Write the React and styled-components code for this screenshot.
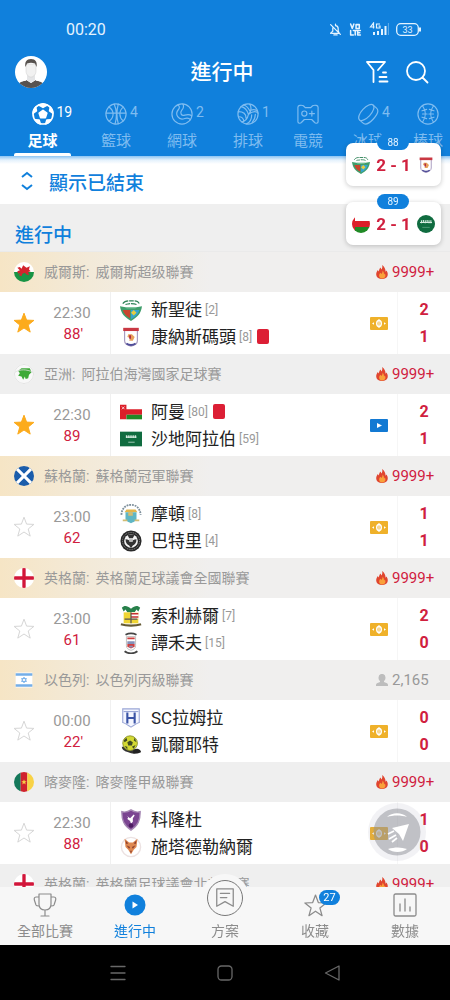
import React, { useState } from "react";
import styled, { createGlobalStyle, css } from "styled-components";

const blue = "#1080dc";
const red = "#d0203e";
const gold = "#efb12a";

const GlobalStyle = createGlobalStyle`
  * { box-sizing: border-box; }
  body {
    margin: 0;
    background: #fff;
    color: #222;
    font-family: Roboto, "Noto Sans CJK TC", sans-serif;
  }
  button { border: 0; padding: 0; background: none; color: inherit; font: inherit; cursor: pointer; }
  ul { list-style: none; margin: 0; padding: 0; }
  h1, h2, h3, p { margin: 0; font-weight: 500; }
  svg { display: block; flex: none; }
`;

const Screen = styled.div`
  position: relative;
  display: flex;
  flex-direction: column;
  height: 100vh;
  overflow: hidden;
`;

/* Header */
const Header = styled.header`
  flex: none;
  color: #fff;
  background: ${blue};
`;
const StatusBar = styled.div`
  display: flex;
  align-items: center;
  justify-content: space-between;
  height: 50px;
  padding: 8px 29px 0 66px;
  font-size: 16px;
  color: #e4f3ff;
`;
const StatusIcons = styled.div`
  display: flex;
  align-items: center;
  gap: 7px;
`;
const AppBar = styled.div`
  display: grid;
  grid-template-columns: 1fr auto 1fr;
  align-items: center;
  height: 44px;
  padding: 0 21px 0 15px;
`;
const AppTitle = styled.h1`
  font-size: 21px;
  line-height: 28px;
`;
const Actions = styled.div`
  display: flex;
  justify-content: flex-end;
  gap: 16px;
`;
const Avatar = styled.button`
  width: 32px;
  height: 32px;
`;
const Sports = styled.nav`
  display: flex;
  padding-left: 2px;
  overflow: hidden;
`;
const SportTab = styled.button`
  flex: none;
  display: flex;
  flex-direction: column;
  width: ${(p) => (p.$digits === 2 ? 81 : p.$digits === 1 ? 66 : 54)}px;
  padding: 9px 12px 0;
  color: ${(p) => (p.$active ? "#fff" : "#7fbcf0")};
`;
const SportIcon = styled.span`
  display: grid;
  grid-template-columns: 1fr 22px 1fr;
  column-gap: 3px;
  align-self: center;
  width: ${(p) => (p.$digits === 2 ? 60 : 44)}px;
  height: 22px;
  font-size: 14px;
  line-height: 18px;
  text-align: left;
  svg { grid-column: 2; }
`;
const SportName = styled.span`
  height: 28px;
  padding-top: 4px;
  font-size: 15px;
  line-height: 24px;
  text-align: center;
  white-space: nowrap;
  font-weight: ${(p) => (p.$active ? 700 : 400)};
`;
const Underline = styled.span`
  height: 3px;
  border-radius: 2px 2px 0 0;
  background: ${(p) => (p.$active ? "#fff" : "transparent")};
`;

/* List */
const Main = styled.main`
  flex: 1;
  min-height: 0;
  overflow-y: auto;
  scrollbar-width: none;
  background: #fff;
`;
const FinishedToggle = styled.button`
  display: flex;
  align-items: center;
  gap: 15px;
  width: 100%;
  height: 48px;
  padding: 2px 20px 0;
  background: linear-gradient(#8cc4f3, #e3f1fc 4px, #fff 8px);
  color: ${blue};
  font-size: 19px;
  font-weight: 500;
`;
const SectionTitle = styled.h2`
  height: 48px;
  padding: 18px 15px 0;
  background: #efefef;
  border-bottom: 1px solid #eaeaea;
  color: ${blue};
  font-size: 19px;
  line-height: 28px;
`;
const LeagueBar = styled.div`
  display: flex;
  align-items: center;
  height: 40px;
  padding: 0 16px 0 14px;
  background: ${(p) => (p.$featured ? "linear-gradient(90deg, #f6e5c5 0, #f3ead9 90px, #f0efee 210px)" : "#efefef")};
`;
const LeagueName = styled.h3`
  display: flex;
  flex: 1;
  gap: 6px;
  padding-left: 10px;
  color: #999;
  font-size: 14px;
  font-weight: 400;
  line-height: 20px;
  white-space: nowrap;
`;
const Heat = styled.span`
  display: flex;
  align-items: center;
  gap: 4px;
  color: ${(p) => (p.$hot ? red : "#999")};
  font-size: 15px;
  span { width: 42px; }
`;
const Match = styled.div`
  display: flex;
  height: 62px;
`;
const StarButton = styled.button`
  display: grid;
  place-items: center;
  width: 48px;
`;
const Clock = styled.div`
  width: 63px;
  padding: 11px 14px 0 0;
  border-right: 1px solid #f0f0f0;
  color: #999;
  font-size: 15px;
  line-height: 21px;
  text-align: center;
`;
const Minute = styled.p`
  color: ${red};
  font-weight: 400;
`;
const Prime = styled.span`
  display: inline-block;
  width: 0;
`;
const Teams = styled.div`
  flex: 1;
  padding: 4px 0 4px 9px;
`;
const Team = styled.div`
  display: flex;
  align-items: center;
  height: 27px;
  color: #222;
  font-size: 17px;
  line-height: 24px;
  white-space: nowrap;
`;
const TeamName = styled.span`
  padding-left: 9px;
`;
const Rank = styled.span`
  padding-left: 3px;
  color: #999;
  font-size: 12px;
`;
const RedCard = styled.span`
  width: 12px;
  height: 15px;
  margin-left: 5px;
  border-radius: 2px;
  background: #dc1f35;
`;
const Feed = styled.button`
  display: grid;
  place-items: center;
  width: 36px;
`;
const Scores = styled.div`
  width: 53px;
  padding: 4px 0;
  border-left: 1px solid #f6f6f6;
  color: ${red};
  font-size: 16px;
  font-weight: 700;
  line-height: 27px;
  text-align: center;
`;

/* Overlays */
const Pinned = styled.aside`
  position: absolute;
  top: 143px;
  right: 9px;
  z-index: 2;
  display: flex;
  flex-direction: column;
  gap: 16px;
`;
const PinnedCard = styled.button`
  position: relative;
  display: flex;
  align-items: center;
  justify-content: space-between;
  width: 95px;
  height: 43px;
  padding: 0 6px;
  border-radius: 7px;
  background: #fff;
  box-shadow: 0 1px 5px rgba(0, 0, 0, 0.22);
  color: ${red};
  font-size: 17px;
  font-weight: 700;
`;
const PinnedMinute = styled.span`
  position: absolute;
  top: -8px;
  left: 31px;
  width: 32px;
  height: 15px;
  border-radius: 8px;
  background: ${blue};
  color: #e4f3ff;
  font-size: 10px;
  font-weight: 400;
  line-height: 15px;
  text-align: center;
`;
const Compass = styled.button`
  position: absolute;
  right: 22px;
  bottom: 137px;
  z-index: 2;
`;

/* Bottom bars */
const BottomNav = styled.nav`
  position: relative;
  z-index: 1;
  flex: none;
  display: grid;
  grid-template-columns: repeat(5, 1fr);
  grid-template-rows: 58px;
  background: #f7f7f7;
`;
const NavItem = styled.button`
  position: relative;
  display: flex;
  flex-direction: column;
  align-items: center;
  justify-content: flex-end;
  gap: 3px;
  padding-bottom: 4px;
  color: ${(p) => (p.$active ? blue : "#8c8c8c")};
  font-size: 14px;
  line-height: 20px;
`;
const raised = css`
  flex: none;
  width: 36px;
  height: 36px;
  margin-bottom: 2px;
  border-radius: 50%;
  border: 1px solid #777;
  background: #f7f7f7;
  box-shadow: 0 0 0 6px #f7f7f7;
`;
const NavIcon = styled.span`
  display: grid;
  place-items: center;
  height: 26px;
  ${(p) => p.$raised && raised}
`;
const NavBadge = styled.span`
  position: absolute;
  top: 3px;
  left: 50%;
  margin-left: 4px;
  width: 21px;
  height: 15px;
  border-radius: 8px;
  background: ${blue};
  color: #fff;
  font-size: 11px;
  line-height: 15px;
`;
const SystemBar = styled.footer`
  flex: none;
  display: grid;
  grid-template-columns: repeat(3, 1fr);
  place-items: center;
  height: 55px;
  padding: 0 64px;
  background: #000;
  color: #686868;
`;

/* Icons */
const Line = ({ s = 22, w = 1.3, box = 24, children, ...rest }) => (
  <svg width={s} height={s} viewBox={`0 0 ${box} ${box}`} fill="none" stroke="currentColor" strokeWidth={w} strokeLinecap="round" strokeLinejoin="round" aria-hidden="true" {...rest}>
    {children}
  </svg>
);

const sportIcons = {
  football: (
    <Line w={1.8}>
      <circle cx="12" cy="12" r="10.9" />
      <path d="m12 8 4.200 3-1.600 4.900H9.400L7.800 11z" fill="currentColor" />
      <path d="M7.500 2.200 12 4.800l4.500-2.600L12 1zM1.300 11l3.500-2.500L4 4.500l-2 3zM22.700 11l-3.500-2.500.8-4 2 3zM3.500 18.300l4.300.4 1.200 4-3-1.500zM20.500 18.300l-4.300.4-1.200 4 3-1.500z" fill="currentColor" />
    </Line>
  ),
  basketball: (
    <Line>
      <circle cx="12" cy="12" r="11" />
      <path d="M10 1.2c3 7 3 14.600 1 21.600M14.500 1.300c-2 7.200-2 14.400 0 21.300M1.200 11h21.600M4.300 4.300c6 4 6 11.500.2 15.500M20 4.500c-5 4-5 10.800-.2 15" />
    </Line>
  ),
  tennis: (
    <Line>
      <circle cx="12" cy="12" r="11" />
      <path d="M13 1.200c1.500 2.600.6 4.600-1.200 6.600-2.500 3-.5 6.700 3.200 5.500 3-1 5.500-.9 7.500.6M7.500 2.200c2.200 1.500 2 3.300.6 4.900-4.500 5.300.1 12.300 6.900 9.800 2.600-.9 4.800-.4 6.200 1.300" />
    </Line>
  ),
  volleyball: (
    <Line>
      <circle cx="12" cy="12" r="11" />
      <path d="M12.500 12.500C11 7.500 8 4.500 4.300 4M14 8.500C12 5 9.500 2.500 7 2.200M13 12c4-3 7.500-3.500 10-1M15 8c2.500-1.200 4.800-1 6.300.3M14 1.300c2 3.500 1.500 7.500-1.200 11M12.500 12.500C11.500 17 9 20.500 5 20.500M16 13c0 4-2 8-5.500 9.800M20 12.500c0 3.500-1.500 6.500-3.500 9M1.400 9.500c5 0 8.500 2.500 8.500 7M2 15c3 0 5 1.500 5.500 5" />
    </Line>
  ),
  esports: (
    <Line>
      <path d="M1 4.500c0-2 3.500-2.500 6-1.500l2 2h6l2-2c2.500-1 6-.5 6 1.500v16c0 2-3 2-4 .5L16 18H8l-3 3c-1 1.500-4 1.500-4-.5z" />
      <circle cx="8" cy="11.500" r="2.800" />
      <path d="M13.500 11.500h5.500M16.200 8.700v5.600" />
    </Line>
  ),
  hockey: (
    <Line>
      <g transform="rotate(-47 12 12)">
        <ellipse cx="12" cy="9.500" rx="11" ry="5" />
        <path d="M1 9.500v5c0 3.500 4.500 5.500 11 5.500s11-2 11-5.500v-5" />
      </g>
    </Line>
  ),
  baseball: (
    <Line>
      <circle cx="12" cy="12" r="11" />
      <path d="M6 3c4 5.500 4 12.500 0 18M18 3c-4 5.500-4 12.500 0 18M5.500 8.500l5-1.500M6 12h5M5.500 15.500l5 1.500M18.500 8.500l-5-1.500M18 12h-5M18.500 15.500l-5 1.500" />
    </Line>
  ),
};

const StatusGlyphs = () => (
  <StatusIcons>
    <Line s={13} w={2.300}>
      <path d="M12 2v2M5 19h14l-2-4v-4c0-4-2-6-5-6M7 9v6l-4 4M9 22h6M3 3l18 18" />
    </Line>
    <Line s={13} w={2.800}>
      <path d="m3 2 3 8 3-8M13 3h6v7h-6zM3 14v8h5M8 14h7M11.500 14v8M21 14h-5v8h5M16 18h4" />
    </Line>
    <svg width="20" height="14" viewBox="0 0 20 14" fill="none" stroke="currentColor" strokeWidth="1.200" aria-hidden="true">
      <path d="M4.500 6.500v-5.500L1.500 5h4M11 2H7.500v4H11V4H9.500" />
      <path d="M5 10v3M9 9v4M13 7v6M16.500 4v9" strokeWidth="2" />
      <path d="M19.500 1v12" opacity=".35" />
    </svg>
    <svg width="25" height="13" viewBox="0 0 25 13" fill="none" stroke="currentColor" strokeWidth="1.300" aria-hidden="true">
      <rect x=".7" y=".7" width="21.600" height="11.600" rx="4" />
      <path d="M24 4.500v4" strokeWidth="2" />
      <text x="11.500" y="10" textAnchor="middle" fontSize="9" fill="currentColor" stroke="none">33</text>
    </svg>
  </StatusIcons>
);

const AvatarArt = () => (
  <svg width="32" height="32" viewBox="0 0 32 32" aria-hidden="true">
    <clipPath id="face"><circle cx="16" cy="16" r="16" /></clipPath>
    <g clipPath="url(#face)">
      <path fill="#fff" d="M0 0h32v32H0z" />
      <path fill="#57524f" d="M2 32c0-5 4-6 9-8l5 3 5-3c5 2 9 3 9 8z" />
      <path fill="#e4e5e7" d="M12 17h8v7l-4 3-4-3z" />
      <path fill="#f1f1f1" stroke="#cfcfcf" strokeWidth=".5" d="M11 8h10v7c0 4-3 6-5 6s-5-2-5-6z" />
      <path fill="#57524f" d="M10.500 11c-1-5 1-8 5.500-8 4.500 0 6.500 3 5.500 8l-1.500-3.500c-3-1-5-1-8 0z" />
      <path stroke="#fff" strokeWidth="1.500" d="m3 25 8-1M29 25l-8-1" />
    </g>
  </svg>
);

const StarShape = ({ on, s = 24 }) => (
  <svg width={s} height={s} viewBox="0 0 24 24" fill={on ? "#fcab1c" : "none"} stroke={on ? "#fcab1c" : "#d6d6d6"} strokeWidth="1" aria-hidden="true">
    <path d="m12 2.200 2.600 6.900 7.300.3-5.700 4.600 2 7.100-6.200-4.100-6.200 4.100 2-7.100L2.100 9.400l7.300-.3z" />
  </svg>
);

const Flame = () => (
  <svg width="12" height="14" viewBox="0 0 12 14" aria-hidden="true">
    <path fill="#e0452f" d="M6 0c.8 2 .2 3.200-.5 4.600C5 4 4.800 3.400 4.600 2.600 3 4 3.400 5 2.700 6.500L1.800 5C.4 7 0 8.600.3 10.200.8 12.700 3 14 6 14s5.200-1.300 5.700-3.800c.3-1.600-.2-3.200-1.200-4.700l-.9 1.300C9.500 4 8.500 1.500 6 0z" />
    <path fill="#f9a13a" d="M6.500 5.500c.3 1.800-.5 2.500-1 3.500L4.400 7.800C2.600 9.500 2.500 13.300 6 13.500c3.800 0 4-3.300 2.800-5L8 9.600c0-1.600-.3-3-1.500-4.100z" />
  </svg>
);

const Person = () => (
  <svg width="12" height="13" viewBox="0 0 12 13" fill="#bdbdbd" aria-hidden="true">
    <path d="M2.500 3.500a3.400 3.500 0 0 1 7 0c0 1.800-.6 2.800-1.500 3.600V8l3 1.200c1 .5 1 1.500 1 2.800H0c0-1.300 0-2.300 1-2.800L4 8v-.9C3.100 6.300 2.500 5.300 2.500 3.500z" />
  </svg>
);

const Money = () => (
  <svg width="18" height="13" viewBox="0 0 18 13" aria-hidden="true">
    <rect width="18" height="13" rx="1" fill={gold} />
    <path fill="#fff" d="m2 6.500 2-1.300v2.600zM16 6.500l-2-1.300v2.600z" />
    <ellipse cx="9" cy="6.500" rx="2.300" ry="3" fill="none" stroke="#fff" strokeWidth="1.400" />
    <path stroke="#fff" d="M9 2v9" />
  </svg>
);
const Video = () => (
  <svg width="18" height="13" viewBox="0 0 18 13" aria-hidden="true">
    <rect width="18" height="13" rx="1" fill="#1279d3" />
    <path fill="#fff" d="m7 4 5 2.500L7 9z" />
  </svg>
);

const flagArt = {
  wales: (
    <>
      <path fill="#fff" d="M0 0h24v12H0z" /><path fill="#189444" d="M0 12h24v12H0z" />
      <path fill="#d3242d" d="m4 7 3-1 2 2 2-4 4 3 4-2-1 4 2 2-3 1 1 4-3-1-2-2-3 1-1 3-3-1 2-3-3 1-1-3 3-1z" />
    </>
  ),
  asia: (
    <>
      <path fill="#f8f8f8" d="M0 0h24v24H0z" />
      <path fill="#3eaa38" d="m5 8 4-3 5 0 5 0 2 5-3 3-1 4-3 1-1-3-2 4-2-4-4-1 2-3z" />
      <path fill="none" stroke="#dcdcdc" d="M1 10c6-4 14-4 22 0" />
      <circle cx="12" cy="12" r="11.500" fill="none" stroke="#ddd" />
    </>
  ),
  scotland: (
    <><path fill="#1b5dab" d="M0 0h24v24H0z" /><path stroke="#fff" strokeWidth="3.600" d="m2 2 20 20M22 2 2 22" /></>
  ),
  england: (
    <><path fill="#fff" d="M0 0h24v24H0z" /><path stroke="#d2163a" strokeWidth="4" d="M12 0v24M0 12h24" /></>
  ),
  cameroon: (
    <>
      <path fill="#14785a" d="M0 0h8v24H0z" /><path fill="#d0222e" d="M8 0h8v24H8z" /><path fill="#f8d246" d="M16 0h8v24h-8z" />
      <path fill="#f8d246" d="m12 9 1 2.200h2.200l-1.800 1.400.7 2.300-2.100-1.400-2.100 1.400.7-2.300-1.800-1.400H11z" />
    </>
  ),
  oman: (
    <><path fill="#fff" d="M0 0h24v8H0z" /><path fill="#dc1f29" d="M0 8h24v8H0zM0 0h4v24H0z" /><path fill="#208a26" d="M4 16h20v8H4z" /></>
  ),
  saudi: (
    <><path fill="#106c40" d="M0 0h24v24H0z" /><path fill="none" stroke="#d5eadf" strokeWidth="1.500" d="M4 10h16M6 7v4M8.500 6.500v4M11 7v4M13.500 6.500v4M16 7v4M18.500 7v4" /><path stroke="#5fa583" d="M7 16.500h10" /></>
  ),
};

const RoundFlag = ({ name, s = 20 }) =>
  name === "israel" ? (
    <svg width={s} height={s} viewBox="0 0 24 24" aria-hidden="true">
      <path fill="#fff" d="M2 3h20v18H2z" /><path fill="#74aee8" d="M2 4h20v3H2zM2 17h20v3H2z" />
      <path fill="none" stroke="#74aee8" d="m12 8.500 3 5.300H9zM12 15.500l3-5.300H9z" />
    </svg>
  ) : (
    <svg width={s} height={s} viewBox="0 0 24 24" aria-hidden="true">
      <clipPath id={`round-${name}`}><circle cx="12" cy="12" r="12" /></clipPath>
      <g clipPath={`url(#round-${name})`}>{flagArt[name]}</g>
    </svg>
  );

const crests = {
  saints: (
    <>
      <path fill="#fff" d="M1 6c3-1 4-4 6-4h10c2 0 3 3 6 4 0 9-4 13-11 17C5 19 1 15 1 6z" />
      <path fill="#3f9e6c" d="M0 8c8 2 16 2 24 0-1 8-5 12-12 16C5 20 1 16 0 8z" />
      <path fill="#c9452f" d="M3 12h8v9c-4-2-7-5-8-9z" /><path fill="#35a6cf" d="M12 12h9c-1 5-4 7-9 10z" />
      <path fill="#e8cc40" d="m15 12 3 3-3 3-3-3z" />
      <path fill="none" stroke="#2e8257" strokeWidth="1.200" d="M3 5c2-3 5-3 6-3M10 2h5M16 2c3 0 4 1 5 3M6 6c2-1 3 0 5-1M12 5c3 0 4 0 6 1" />
      <path fill="none" stroke="#7fc69f" strokeWidth="1.500" d="M7 9.500h10" />
    </>
  ),
  nomads: (
    <>
      <path fill="#fff" stroke="#a99cc0" strokeWidth="1.300" d="M5 4h14v12c0 3-3 5-7 6-4-1-7-3-7-6z" />
      <path fill="#c93843" d="M3.500 2h17v3.500h-17z" /><path fill="#e7a05a" d="M9 9h4l3 3-2 4h-4l1-3-3-1z" />
      <path fill="#b02b45" d="M10 10h2v4h-2z" /><path fill="none" stroke="#504d98" strokeWidth="2" d="M7 19c3 2 7 2 10 0" />
    </>
  ),
  oman: (
    <g transform="translate(0 4)">
      <path fill="#fff" d="M0 0h24v5H0z" /><path fill="#dc1f29" d="M0 5h24v6H0zM0 0h7v16H0z" /><path fill="#208a26" d="M7 11h17v5H7z" />
      <path stroke="#fff" strokeWidth=".8" d="m2 2 3 3M5 2 2 5" />
    </g>
  ),
  saudi: (
    <g transform="translate(0 4)">
      <path fill="#106c40" d="M0 0h24v16H0z" /><path fill="none" stroke="#d5eadf" strokeWidth="1.200" d="M7 6h11M7 4v3M9 4v3M11 4v3M13 4v3M15 4v3M17 4v3" />
      <path stroke="#d5eadf" strokeWidth=".8" d="M9 11.500h7" />
    </g>
  ),
  morton: (
    <>
      <path fill="none" stroke="#7d8f9b" strokeWidth="2" strokeDasharray="2 1" d="M1.500 13C2 5 7 2 12 2s10 3 10.500 11" />
      <path fill="#e3b64b" d="M7 7h10l2 3H5z" /><path fill="#5fb6c4" d="M6 10h12v8c-2 3-4 3-6 4-2-1-4-1-6-4z" />
      <path fill="#d1bd74" d="M9 10h5v4H9zM3 18h5v2H3zM16 18h5v2h-5z" />
    </>
  ),
  thistle: (
    <>
      <circle cx="12" cy="12" r="11.500" fill="#292929" /><circle cx="12" cy="12" r="9.300" fill="none" stroke="#999" strokeDasharray="1 1" />
      <circle cx="12" cy="12" r="7.500" fill="#f4f4f4" />
      <path fill="#333" d="M8 5h8l-2 4h-4zM6 10c3 0 4 1 6 3 2-2 3-3 6-3 0 4-2 6-4 7l-2 3-2-3c-2-1-4-3-4-7z" />
      <path fill="#bbb" d="M10 10h4v3h-4z" />
    </>
  ),
  moors: (
    <>
      <path fill="#27804a" d="M2 3c3-3 6-2 10 1 4-3 7-4 10-1l-2 4-2-2-2 3H8L6 5 4 7z" />
      <path fill="#f0d534" d="M4 8h16v12H4z" /><path fill="#fff" d="M12 8h8v7h-8z" />
      <path stroke="#c63131" strokeWidth="1.600" d="M12 9.500h8M12 13h8" /><path stroke="#555" strokeWidth="1.300" d="M5 15.500h14M12 8v12" />
      <path fill="none" stroke="#655a34" strokeWidth="2.500" d="M1 21c6 2 16 2 22 0" />
    </>
  ),
  tamworth: (
    <>
      <path fill="none" stroke="#444" strokeWidth="2" d="M6 3c4-2 8-2 12 0M5 21c4 3 10 3 14 0" />
      <path fill="#fff" stroke="#bbb" d="M7 5h10v10c0 3-2 4-5 5-3-1-5-2-5-5z" />
      <path fill="#cf4040" d="M8 6h8v2H8zM8 13h8v3l-4 2-4-2z" /><path fill="#8390b8" d="M8 10h8v3H8zM10 15h4v2h-4z" />
    </>
  ),
  ramla: (
    <>
      <path fill="#f4f6ff" stroke="#9aa6d6" strokeWidth="1.200" d="M3 2h18v15c-3 1-6 3-9 5-3-2-6-4-9-5z" />
      <path stroke="#3b54a6" strokeWidth="2.300" d="M8 6v12M16 6v12M8 12h8" /><path stroke="#8796ce" d="M4 5h16" />
    </>
  ),
  yellow: (
    <>
      <path fill="#333" d="M2 14c4 0 5 3 9 3s9 0 12 3c-5 2-10 2-14 0-4-1-7-3-7-6z" />
      <circle cx="11" cy="10" r="8" fill="#d3d932" stroke="#8d9430" />
      <path fill="#404b25" d="m11 7 3 2-1 3.500H9L8 9zM4 7l3-3 1 3-3 2zM16 4l2 5-3-2zM5 13l3 1v3zM17 12l-2 4-2-2z" />
      <path fill="#222" d="M15 17c4-2 6-1 8 2l-3 2h-6z" />
    </>
  ),
  purple: (
    <>
      <path fill="#7b4591" stroke="#a588b3" strokeWidth="1.500" d="M2 3c4 1 7 0 10-2 3 2 6 3 10 2 0 9-2 15-10 20C4 18 2 12 2 3z" />
      <path fill="#fff" d="m7 7 4 3 4-4 1 1-2 3v4l-2 2-1-3-3-2 1-2z" /><circle cx="12" cy="18" r="2.500" fill="#4d1d62" />
    </>
  ),
  fox: (
    <>
      <circle cx="12" cy="12" r="10.500" fill="#fff" stroke="#ece2e2" strokeWidth="1.500" />
      <path fill="#de8850" d="m5 3 5 4h4l5-4-1 9-3 3-3 5-3-5-3-3z" />
      <path fill="#8a3d2f" d="m7 10 4 2-1 2zM17 10l-4 2 1 2zM11 16h2l-1 3zM6 5l3 3-2 1zM18 5l-3 3 2 1z" />
    </>
  ),
};
const Crest = ({ name, s = 22 }) => (
  <svg width={s} height={s} viewBox="0 0 24 24" aria-hidden="true">{crests[name]}</svg>
);

const navIcons = {
  trophy: (
    <Line s={24} w={1.200}>
      <path d="M6 1h12v10c0 4-2 6-6 6s-6-2-6-6zM6 4H3c-2 0-2 2-1.500 3.500L3 12c.4 1 1 1 3 1M18 4h3c2 0 2 2 1.500 3.500L21 12c-.4 1-1 1-3 1M12 17v5.500M8 23h8" />
    </Line>
  ),
  play: (
    <svg width="22" height="22" viewBox="0 0 22 22" aria-hidden="true">
      <circle cx="11" cy="11" r="10.500" fill={blue} /><path fill="#fff" d="m8.500 7.500 5.500 3.500-5.500 3.500z" />
    </svg>
  ),
  plan: (
    <Line s={22} w={1.400}>
      <path d="M3 2h18v19l-9-5-9 5zM7 7h10M7 11.500h7" />
    </Line>
  ),
  star: (
    <Line s={25} w={1.200}>
      <path d="m12 2 2.700 7.200 7.500.4-6 4.700 2.100 7.500L12 17.500l-6.300 4.300 2.100-7.500-6-4.700 7.500-.4z" />
    </Line>
  ),
  chart: (
    <Line s={24} w={1.300}>
      <rect x="1" y="1" width="22" height="22" rx="1.500" /><path d="M7 11v7M12 6v12M17 14v4" />
    </Line>
  ),
};

/* Data */
const sports = [
  { id: "football", name: "足球", count: "19" },
  { id: "basketball", name: "籃球", count: "4" },
  { id: "tennis", name: "網球", count: "2" },
  { id: "volleyball", name: "排球", count: "1" },
  { id: "esports", name: "電競", count: "" },
  { id: "hockey", name: "冰球", count: "4" },
  { id: "baseball", name: "棒球", count: "" },
];

const leagues = [
  {
    flag: "wales", country: "威爾斯", league: "威爾斯超级聯賽", featured: true, heat: "9999+",
    match: { starred: true, time: "22:30", minute: "88", tick: true, feed: "money",
      teams: [["saints", "新聖徒", "2", 2], ["nomads", "康納斯碼頭", "8", 1, true]] },
  },
  {
    flag: "asia", country: "亞洲", league: "阿拉伯海灣國家足球賽", heat: "9999+",
    match: { starred: true, time: "22:30", minute: "89", feed: "video",
      teams: [["oman", "阿曼", "80", 2, true], ["saudi", "沙地阿拉伯", "59", 1]] },
  },
  {
    flag: "scotland", country: "蘇格蘭", league: "蘇格蘭冠軍聯賽", featured: true, heat: "9999+",
    match: { time: "23:00", minute: "62", feed: "money",
      teams: [["morton", "摩頓", "8", 1], ["thistle", "巴特里", "4", 1]] },
  },
  {
    flag: "england", country: "英格蘭", league: "英格蘭足球議會全國聯賽", featured: true, heat: "9999+",
    match: { time: "23:00", minute: "61", feed: "money",
      teams: [["moors", "索利赫爾", "7", 2], ["tamworth", "譚禾夫", "15", 0]] },
  },
  {
    flag: "israel", country: "以色列", league: "以色列丙級聯賽", featured: true, viewers: "2,165",
    match: { time: "00:00", minute: "22", tick: true, feed: "money",
      teams: [["ramla", "SC拉姆拉", "", 0], ["yellow", "凱爾耶特", "", 0]] },
  },
  {
    flag: "cameroon", country: "喀麥隆", league: "喀麥隆甲級聯賽", heat: "9999+",
    match: { time: "22:30", minute: "88", tick: true, feed: "money",
      teams: [["purple", "科隆杜", "", 1], ["fox", "施塔德勒納爾", "", 0]] },
  },
  { flag: "england", country: "英格蘭", league: "英格蘭足球議會北部聯賽", heat: "9999+" },
];

const navItems = [
  { icon: "trophy", label: "全部比賽" },
  { icon: "play", label: "進行中", active: true },
  { icon: "plan", label: "方案", raised: true },
  { icon: "star", label: "收藏", badge: "27" },
  { icon: "chart", label: "數據" },
];

function MatchRow({ match }) {
  const [starred, setStarred] = useState(Boolean(match.starred));
  return (
    <Match>
      <StarButton aria-label="收藏" aria-pressed={starred} onClick={() => setStarred(!starred)}>
        <StarShape on={starred} />
      </StarButton>
      <Clock>
        {match.time}
        <Minute>{match.minute}{match.tick && <Prime>'</Prime>}</Minute>
      </Clock>
      <Teams>
        {match.teams.map(([crest, name, rank, , card]) => (
          <Team key={name}>
            <Crest name={crest} />
            <TeamName>{name}</TeamName>
            {rank && <Rank>[{rank}]</Rank>}
            {card && <RedCard />}
          </Team>
        ))}
      </Teams>
      <Feed aria-label={match.feed === "video" ? "直播" : "賠率"}>
        {match.feed === "video" ? <Video /> : <Money />}
      </Feed>
      <Scores>
        {match.teams.map((team) => <div key={team[1]}>{team[3]}</div>)}
      </Scores>
    </Match>
  );
}

export default function App() {
  const [sport, setSport] = useState("football");
  return (
    <Screen>
      <GlobalStyle />
      <Header>
        <StatusBar>
          <span>00:20</span>
          <StatusGlyphs />
        </StatusBar>
        <AppBar>
          <Avatar aria-label="個人"><AvatarArt /></Avatar>
          <AppTitle>進行中</AppTitle>
          <Actions>
            <button aria-label="篩選">
              <Line s={24} w={1.800}>
                <path d="M2 2h18l-7 8M2 2l6.500 8v12M18 12.500h3M14.500 17h7M14.500 21.500h8" />
              </Line>
            </button>
            <button aria-label="搜尋">
              <Line s={24} w={1.800}>
                <circle cx="11" cy="11" r="9" /><path d="m17.500 17.500 5 5" />
              </Line>
            </button>
          </Actions>
        </AppBar>
        <Sports>
          {sports.map((s) => (
            <SportTab key={s.id} $digits={s.count.length} $active={sport === s.id} onClick={() => setSport(s.id)}>
              <SportIcon $digits={s.count.length}>{sportIcons[s.id]}{s.count}</SportIcon>
              <SportName $active={sport === s.id}>{s.name}</SportName>
              <Underline $active={sport === s.id} />
            </SportTab>
          ))}
        </Sports>
      </Header>

      <Main>
        <FinishedToggle>
          <svg width="14" height="20" viewBox="0 0 14 20" fill="none" stroke="currentColor" strokeWidth="2" aria-hidden="true">
            <path d="m2 6 5-4 5 4M2 14l5 4 5-4" />
          </svg>
          顯示已結束
        </FinishedToggle>
        <SectionTitle>進行中</SectionTitle>
        <ul>
          {leagues.map((l) => (
            <li key={l.country + l.league}>
              <LeagueBar $featured={l.featured}>
                <RoundFlag name={l.flag} />
                <LeagueName><span>{l.country}:</span><span>{l.league}</span></LeagueName>
                <Heat $hot={Boolean(l.heat)}>
                  {l.heat ? <Flame /> : <Person />}
                  <span>{l.heat || l.viewers}</span>
                </Heat>
              </LeagueBar>
              {l.match && <MatchRow match={l.match} />}
            </li>
          ))}
        </ul>
      </Main>

      <Pinned>
        <PinnedCard>
          <PinnedMinute>88</PinnedMinute>
          <Crest name="saints" s={18} />
          <span>2 - 1</span>
          <Crest name="nomads" s={18} />
        </PinnedCard>
        <PinnedCard>
          <PinnedMinute>89</PinnedMinute>
          <RoundFlag name="oman" s={18} />
          <span>2 - 1</span>
          <RoundFlag name="saudi" s={18} />
        </PinnedCard>
      </Pinned>

      <Compass aria-label="導覽">
        <svg width="62" height="62" viewBox="0 0 62 62" aria-hidden="true">
          <circle cx="31" cy="31" r="29" fill="#9298aa" opacity=".12" />
          <circle cx="31" cy="31" r="23.500" fill="#8d9097" opacity=".5" />
          <path fill="#fff" d="m26 27 17-4-6 17-4-7zM21 16c5-5 15-5 20 0-6-2-14-2-20 0zM22 48c7-2 13-2 19 0-5 4-14 4-19 0z" />
          <path stroke="#fff" strokeWidth="1.800" d="m22 33 6-3M23 38l7-4M26 41l5-4" />
        </svg>
      </Compass>

      <BottomNav>
        {navItems.map((n) => (
          <NavItem key={n.label} $active={n.active}>
            <NavIcon $raised={n.raised}>{navIcons[n.icon]}</NavIcon>
            {n.badge && <NavBadge>{n.badge}</NavBadge>}
            {n.label}
          </NavItem>
        ))}
      </BottomNav>
      <SystemBar>
        <Line s={18} w={1.300} box={18}><path d="M2 2.500h14M2 9h14M2 15.500h14" /></Line>
        <Line s={16} w={1.300} box={16}><rect x="1" y="1" width="14" height="14" rx="3.500" /></Line>
        <Line s={16} w={1.300} box={16}><path d="M15 1v14L1.500 8z" /></Line>
      </SystemBar>
    </Screen>
  );
}
